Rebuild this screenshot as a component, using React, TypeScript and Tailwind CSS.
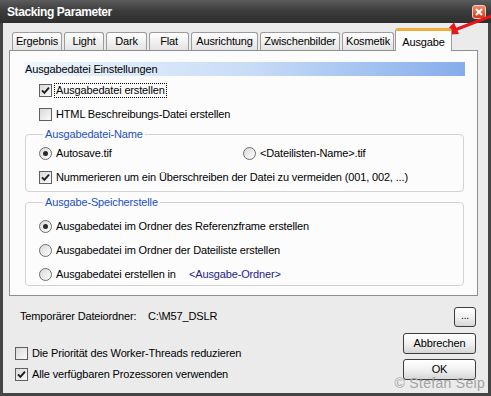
import React from "react";

const TABS = [
  { label: "Ergebnis", w: "w-[50px]" },
  { label: "Light", w: "w-[40px]" },
  { label: "Dark", w: "w-[41px]" },
  { label: "Flat", w: "w-[40px]" },
  { label: "Ausrichtung", w: "w-[67px]" },
  { label: "Zwischenbilder", w: "w-[80px]" },
  { label: "Kosmetik", w: "w-[52px]" },
];

function CheckBox({ checked = false }: { checked?: boolean }) {
  return (
    <span className="flex h-[13px] w-[13px] shrink-0 items-center justify-center border border-[#5f5f5f] bg-linear-to-br from-[#d9d9d9] to-[#fbfbfb]">
      {checked && (
        <svg width="9" height="9" viewBox="0 0 9 9">
          <path d="M1 4.3 L3.4 6.8 L8 1.6" fill="none" stroke="#1e1e1e" strokeWidth="1.9" />
        </svg>
      )}
    </span>
  );
}

function RadioDot({ checked = false }: { checked?: boolean }) {
  return (
    <span className="flex h-[13px] w-[13px] shrink-0 items-center justify-center rounded-full border border-[#6c6c6c] bg-linear-to-br from-[#dadada] to-[#fdfdfd]">
      {checked && <span className="h-[5px] w-[5px] rounded-full bg-[#2a2a2a]" />}
    </span>
  );
}

function Check({
  checked,
  children,
  className = "",
}: {
  checked?: boolean;
  children: React.ReactNode;
  className?: string;
}) {
  return (
    <div className={"flex h-[16px] items-center gap-[2px] " + className}>
      <CheckBox checked={checked} />
      {children}
    </div>
  );
}

function Radio({
  checked,
  children,
  className = "",
}: {
  checked?: boolean;
  children: React.ReactNode;
  className?: string;
}) {
  return (
    <div className={"flex h-[16px] items-center gap-[2px] " + className}>
      <RadioDot checked={checked} />
      {children}
    </div>
  );
}

function XpButton({ children, className = "" }: { children: React.ReactNode; className?: string }) {
  return (
    <button
      className={
        "flex items-center justify-center rounded-[3px] border border-[#3d3d3d] bg-linear-to-b from-[#ffffff] via-[#f1f1f1] to-[#d6d6d6] text-black " +
        className
      }
    >
      {children}
    </button>
  );
}

export default function App() {
  return (
    <div className="relative flex h-[396px] w-[491px] flex-col overflow-hidden bg-[#454545] font-['Liberation_Sans',Arial,sans-serif] text-[11px] tracking-[-0.15px] text-black">
      {/* Title bar */}
      <div className="flex h-[23px] shrink-0 items-center justify-between bg-linear-to-b from-[#5c5c5c] via-[#3b3b3b] to-[#2f2f2f] pl-[7px] pr-[5px]">
        <span className="text-[12px] font-bold tracking-[-0.4px] text-white">Stacking Parameter</span>
        <span className="flex h-[14px] w-[14px] items-center justify-center rounded-[3px] border border-[#f3d0c4] bg-linear-to-b from-[#f08a66] to-[#cd3a16]">
          <svg width="8" height="8" viewBox="0 0 8 8">
            <path d="M1 1 L7 7 M7 1 L1 7" stroke="#fff" strokeWidth="1.8" />
          </svg>
        </span>
      </div>

      {/* Body */}
      <div className="mx-[3px] mb-[3px] flex flex-1 flex-col bg-[#ebebeb]">
        {/* Tabs */}
        <div className="ml-[6px] mr-[10px] pt-[5px]">
          <div className="relative z-10 flex items-end gap-[2px] pl-[3px]">
            {TABS.map((t) => (
              <div
                key={t.label}
                className={
                  "flex h-[18px] items-center justify-center rounded-t-[3px] border border-b-0 border-[#9c9c9c] bg-linear-to-b from-[#ffffff] to-[#e3e3e3] " +
                  t.w
                }
              >
                {t.label}
              </div>
            ))}
            <div className="-mb-[1px] -ml-[1px] flex h-[23px] w-[57px] items-start justify-center rounded-t-[3px] border border-b-0 border-t-[3px] border-[#9c9c9c] border-t-[#f2ac3c] bg-[#fcfcfc] pt-[3px]">
              Ausgabe
            </div>
          </div>

          {/* Panel */}
          <div className="flex flex-col border border-[#8f8f8f] bg-[#fcfcfc] pb-[9px] pl-[14px] pr-[12px] pt-[11px]">
            <div className="flex h-[14px] items-center bg-linear-to-r from-[#eef5fd] via-[#c9ddf7] to-[#86adeb] pl-[1px]">
              Ausgabedatei Einstellungen
            </div>
            <Check checked className="mt-[6px] pl-[15px]">
              <span className="border border-dotted border-black px-[1px] leading-[13px]">Ausgabedatei erstellen</span>
            </Check>
            <Check className="mt-[8px] pl-[15px]">
              <span className="pl-[2px]">HTML Beschreibungs-Datei erstellen</span>
            </Check>

            <fieldset className="mx-[1px] mt-[5px] rounded-[4px] border border-[#d3d3d3] pb-[6px] pl-[13px] pt-[4px]">
              <legend className="ml-[4px] px-[2px] leading-[14px] text-[#1d4fc2]">Ausgabedatei-Name</legend>
              <div className="flex">
                <Radio checked className="w-[204px]">
                  <span className="pl-[2px]">Autosave.tif</span>
                </Radio>
                <Radio>
                  <span className="pl-[2px]">&lt;Dateilisten-Name&gt;.tif</span>
                </Radio>
              </div>
              <Check checked className="mt-[8px]">
                <span className="pl-[2px]">
                  Nummerieren um ein Überschreiben der Datei zu vermeiden (001, 002, ...)
                </span>
              </Check>
            </fieldset>

            <fieldset className="mx-[1px] mt-[3px] flex flex-col gap-[8px] rounded-[4px] border border-[#d3d3d3] pb-[3px] pl-[13px] pt-[9px]">
              <legend className="ml-[4px] px-[2px] leading-[14px] text-[#1d4fc2]">Ausgabe-Speicherstelle</legend>
              <Radio checked>
                <span className="pl-[2px]">Ausgabedatei im Ordner des Referenzframe erstellen</span>
              </Radio>
              <Radio>
                <span className="pl-[2px]">Ausgabedatei im Ordner der Dateiliste erstellen</span>
              </Radio>
              <Radio>
                <span className="w-[133px] pl-[2px]">Ausgabedatei erstellen in</span>
                <span className="text-[#1c1c8a]">&lt;Ausgabe-Ordner&gt;</span>
              </Radio>
            </fieldset>
          </div>
        </div>

        {/* Bottom area */}
        <div className="flex flex-1 pr-[12px] pt-[11px]">
          <div className="flex flex-1 flex-col">
            <div className="flex h-[19px] items-center pl-[17px]">
              <span className="w-[128px]">Temporärer Dateiordner:</span>
              <span>C:\M57_DSLR</span>
            </div>
            <Check className="mt-[19px] pl-[12px]">
              <span className="pl-[2px]">Die Priorität des Worker-Threads reduzieren</span>
            </Check>
            <Check checked className="mt-[5px] pl-[12px]">
              <span className="pl-[2px]">Alle verfügbaren Prozessoren verwenden</span>
            </Check>
          </div>
          <div className="flex w-[73px] flex-col items-end">
            <XpButton className="h-[20px] w-[22px] pb-[3px] text-[10px]">...</XpButton>
            <XpButton className="mt-[6px] h-[21px] w-[73px]">Abbrechen</XpButton>
            <XpButton className="mt-[5px] h-[21px] w-[73px]">OK</XpButton>
          </div>
        </div>
      </div>

      {/* Watermark */}
      <span className="absolute bottom-[2px] right-[6px] text-[14px] tracking-[0.3px] text-[#a3a3a3]">
        © Stefan Seip
      </span>

      {/* Red arrow */}
      <svg className="pointer-events-none absolute left-0 top-0" width="491" height="50" viewBox="0 0 491 50">
        <path d="M494 15 L452 31" stroke="#e5161c" strokeWidth="3" />
        <path d="M442 35 L459 34 L454 22.5 Z" fill="#e5161c" />
      </svg>
    </div>
  );
}
